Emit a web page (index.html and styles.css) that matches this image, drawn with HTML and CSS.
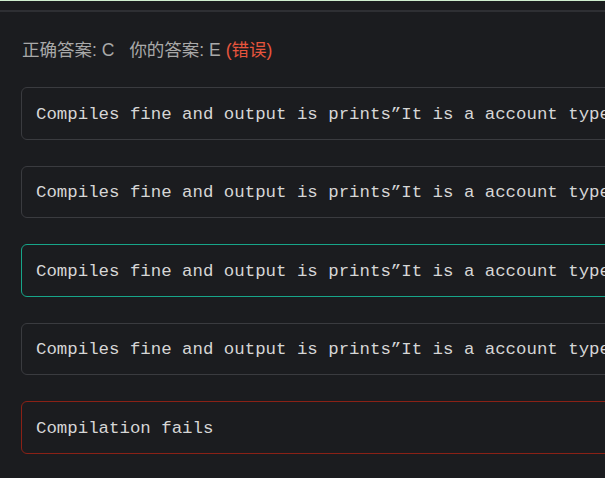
FILE: index.html
```html
<!DOCTYPE html>
<html>
<head>
<meta charset="utf-8">
<link rel="stylesheet" href="styles.css">
</head>
<body>
<div class="topbar"></div>
<div class="page">
  <div class="result">
    <span>正确答案: C</span>
    <span class="yours">你的答案: E <span class="wrong">(错误)</span></span>
  </div>
  <div class="options">
    <div class="option">Compiles fine and output is prints”It is a account type”</div>
    <div class="option">Compiles fine and output is prints”It is a account type”</div>
    <div class="option correct">Compiles fine and output is prints”It is a account type”</div>
    <div class="option">Compiles fine and output is prints”It is a account type”</div>
    <div class="option chosen">Compilation fails</div>
  </div>
</div>
</body>
</html>
```

FILE: styles.css
```css
html, body {
  margin: 0;
  padding: 0;
  background: #1b1c1f;
  overflow: hidden;
  height: 100%;
}
.topbar {
  box-sizing: border-box;
  height: 12px;
  border-top: 1px solid #cfeecf;
  border-bottom: 2px solid #2e2f33;
  background: #1b1c1f;
}
.page {
  padding-left: 21px;
  width: 760px;
}
.result {
  font-family: "Liberation Sans", "Noto Sans CJK SC", sans-serif;
  font-size: 17.5px;
  color: #a9a9a9;
  height: 22px;
  line-height: 22px;
  margin-top: 27px;
  padding-left: 1px;
  display: flex;
  gap: 15px;
}
.wrong {
  color: #e8553d;
}
.options {
  margin-top: 26px;
  display: flex;
  flex-direction: column;
  gap: 26px;
}
.option {
  box-sizing: border-box;
  height: 52.5px;
  border: 1px solid #3a3b3f;
  border-radius: 6px;
  padding-left: 14px;
  padding-top: 2px;
  display: flex;
  align-items: center;
  font-family: "Liberation Mono", monospace;
  font-size: 17.4px;
  color: #d6d6d6;
  white-space: nowrap;
}
.option.correct {
  border-color: #17a589;
}
.option.chosen {
  border-color: #8a2116;
}
```
